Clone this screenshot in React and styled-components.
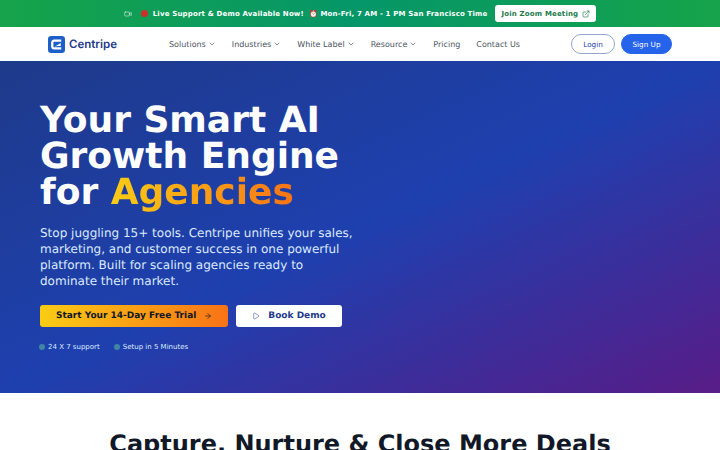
import React from 'react';
import styled, { createGlobalStyle } from 'styled-components';
import { ChevronDown, ExternalLink, Video, Play, ArrowRight } from 'lucide-react';

const GlobalStyle = createGlobalStyle`
    html, body {
        margin: 0;
        padding: 0;
        height: 450px;
        overflow: hidden;
        background: #fff;
        font-family: "DejaVu Sans", sans-serif;
        text-rendering: geometricPrecision;
    }
`;

const Banner = styled.div`
    height: 27px;
    display: flex;
    align-items: center;
    justify-content: center;
    background: linear-gradient(90deg, #16a34a, #059669 50%, #16a34a);
    color: #fff;
    font-size: 7px;
    letter-spacing: 0.175px;
    font-weight: 700;
    white-space: nowrap;
`;

const LiveDot = styled.span`
    width: 7px;
    height: 7px;
    margin: 0 5px 0 9px;
    border-radius: 50%;
    background: #c8322b;
`;

const BannerTime = styled.span`
    margin-left: 5px;
`;

const ZoomButton = styled.a`
    display: flex;
    align-items: center;
    gap: 4px;
    height: 17px;
    margin-left: 8px;
    padding: 0 6px;
    background: #fff;
    border-radius: 3px;
    color: #1b7a4b;
`;

const Nav = styled.nav`
    height: 34px;
    display: flex;
    align-items: center;
    padding: 0 48px;
    background: #fff;
`;

const Logo = styled.div`
    display: flex;
    align-items: center;
    gap: 4px;
    width: 121px;
    color: #1e3a8a;
    font-family: "Inter", sans-serif;
    font-size: 11.5px;
    font-weight: 600;
`;

const Links = styled.div`
    display: flex;
    align-items: center;
    gap: 16px;
    flex: 1;
`;

const NavLink = styled.a`
    display: flex;
    align-items: center;
    gap: 2px;
    color: #4b5563;
    font-size: 8px;
`;

const AuthButton = styled.a`
    display: flex;
    align-items: center;
    justify-content: center;
    box-sizing: border-box;
    height: 20px;
    width: ${p => p.$primary ? '51px' : '44px'};
    margin-left: 6px;
    border-radius: 11px;
    border: 1px solid ${p => p.$primary ? '#2563eb' : '#93a5d0'};
    background: ${p => p.$primary ? '#2563eb' : '#fff'};
    color: ${p => p.$primary ? '#fff' : '#1e40af'};
    font-size: 7.25px;
`;

const Hero = styled.section`
    height: 332px;
    box-sizing: border-box;
    padding: 42px 40px 0;
    background: linear-gradient(to bottom right, #1e3a8a, #1e40af 50%, #581c87);
    color: #fff;
`;

const Title = styled.h1`
    margin: 0;
    font-size: 36px;
    line-height: 36px;
    font-weight: 700;
`;

const Accent = styled.span`
    background: linear-gradient(90deg, #facc15, #f97316);
    -webkit-background-clip: text;
    background-clip: text;
    color: transparent;
`;

const Lead = styled.p`
    margin: 14px 0 0;
    width: 320px;
    font-size: 12px;
    line-height: 16px;
    color: #dbeafe;
`;

const Actions = styled.div`
    display: flex;
    gap: 8px;
    margin-top: 16px;
`;

const CtaButton = styled.a`
    display: flex;
    align-items: center;
    gap: 8px;
    height: 22px;
    padding: 0 16px;
    border-radius: 3px;
    font-size: 9px;
    font-weight: 700;
`;

const TrialButton = styled(CtaButton)`
    background: linear-gradient(90deg, #facc15, #f97316);
    color: #111827;
`;

const DemoButton = styled(CtaButton)`
    background: #fff;
    color: #1e3a8a;
`;

const Perks = styled.div`
    display: flex;
    gap: 14px;
    margin-top: 16px;
    margin-left: -1px;
    font-size: 7px;
    color: #dbeafe;
`;

const Perk = styled.div`
    display: flex;
    align-items: center;
    gap: 3px;
`;

const PerkDot = styled.span`
    width: 6px;
    height: 6px;
    border-radius: 50%;
    background: #3f86a3;
`;

const Section = styled.section`
    padding-top: 37px;
    background: #fff;
    text-align: center;
`;

const SectionTitle = styled.h2`
    margin: 0;
    font-size: 24px;
    line-height: 28px;
    color: #111827;
`;

const LogoMark = () => (
    <svg width="17" height="17" viewBox="0 0 18 18">
        <rect width="18" height="18" rx="3.5" fill="#1d5fc9" />
        <path d="M14 5H6.5Q4.5 5 4.5 7V11Q4.5 13 6.5 13H14" fill="none" stroke="#fff" strokeWidth="2.4" />
        <path d="M7 11.5L13.5 7.5V10.5H10Z" fill="#fff" />
    </svg>
);

const menu = [
    { label: 'Solutions', caret: true },
    { label: 'Industries', caret: true },
    { label: 'White Label', caret: true },
    { label: 'Resource', caret: true },
    { label: 'Pricing' },
    { label: 'Contact Us' },
];

const App = () => {
    return (
        <div>
            <GlobalStyle />
            <Banner>
                <Video size={8} strokeWidth={1.5} />
                <LiveDot />
                Live Support &amp; Demo Available Now!
                <BannerTime>⏰ Mon-Fri, 7 AM - 1 PM San Francisco Time</BannerTime>
                <ZoomButton>Join Zoom Meeting <ExternalLink size={8} /></ZoomButton>
            </Banner>
            <Nav>
                <Logo><LogoMark />Centripe</Logo>
                <Links>
                    {menu.map(m => (
                        <NavLink key={m.label}>
                            {m.label}
                            {m.caret && <ChevronDown size={8} />}
                        </NavLink>
                    ))}
                </Links>
                <AuthButton>Login</AuthButton>
                <AuthButton $primary>Sign Up</AuthButton>
            </Nav>
            <Hero>
                <Title>Your Smart AI<br />Growth Engine<br />for <Accent>Agencies</Accent></Title>
                <Lead>Stop juggling 15+ tools. Centripe unifies your sales, marketing, and customer success in one powerful platform. Built for scaling agencies ready to dominate their market.</Lead>
                <Actions>
                    <TrialButton>Start Your 14-Day Free Trial <ArrowRight size={8} /></TrialButton>
                    <DemoButton><Play size={8} strokeWidth={1.5} /> Book Demo</DemoButton>
                </Actions>
                <Perks>
                    <Perk><PerkDot />24 X 7 support</Perk>
                    <Perk><PerkDot />Setup in 5 Minutes</Perk>
                </Perks>
            </Hero>
            <Section>
                <SectionTitle>Capture, Nurture &amp; Close More Deals</SectionTitle>
            </Section>
        </div>
    );
};

export default App;
